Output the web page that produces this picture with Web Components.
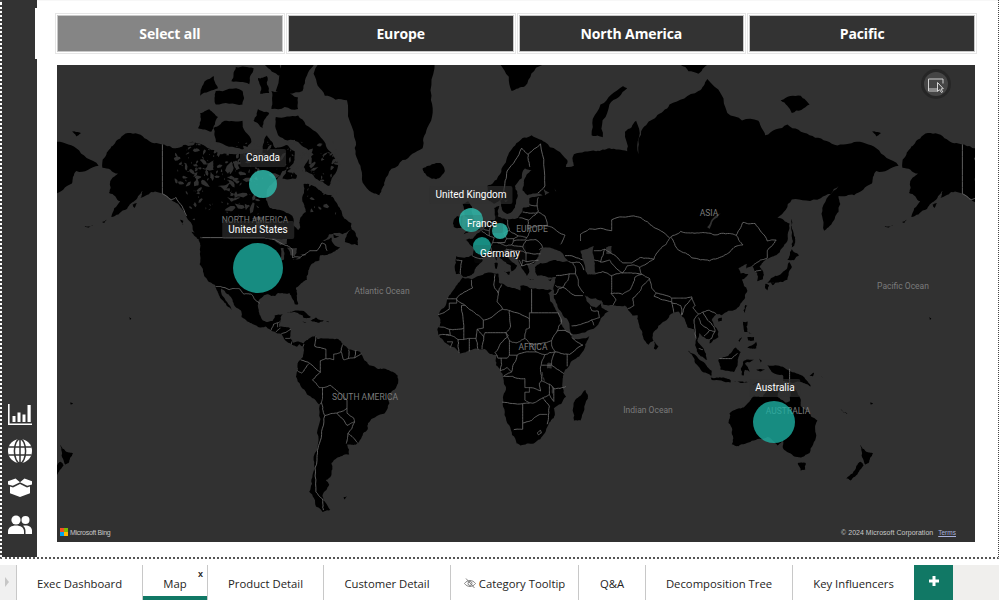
<!DOCTYPE html>
<html lang="en">
<head>
<meta charset="utf-8">
<title>Map</title>
<style>
  html, body { margin: 0; padding: 0; background: #fff; }
  body { width: 999px; height: 600px; overflow: hidden; font-family: "Open Sans", "Liberation Sans", sans-serif; }
</style>
</head>
<body>
<report-page>
  <report-sidebar slot="side"></report-sidebar>
  <slicer-bar slot="main">
    <slicer-button selected>Select all</slicer-button>
    <slicer-button>Europe</slicer-button>
    <slicer-button>North America</slicer-button>
    <slicer-button>Pacific</slicer-button>
  </slicer-bar>
  <world-map slot="main">
    <map-text x="255" y="220">NORTH AMERICA</map-text>
    <map-text x="382" y="291">Atlantic Ocean</map-text>
    <map-text x="365" y="397">SOUTH AMERICA</map-text>
    <map-text x="533" y="347">AFRICA</map-text>
    <map-text x="532" y="229">EUROPE</map-text>
    <map-text x="709" y="213">ASIA</map-text>
    <map-text x="903" y="286">Pacific Ocean</map-text>
    <map-text x="648" y="410">Indian Ocean</map-text>
    <map-text x="788" y="411">AUSTRALIA</map-text>
    <map-bubble x="263" y="184" r="14" light></map-bubble>
    <map-bubble x="258" y="268" r="25"></map-bubble>
    <map-bubble x="471" y="220" r="12" light></map-bubble>
    <map-bubble x="500" y="231" r="8" light></map-bubble>
    <map-bubble x="482" y="246" r="9"></map-bubble>
    <map-bubble x="774" y="422" r="21"></map-bubble>
    <map-label x="263" y="158">Canada</map-label>
    <map-label x="258" y="230">United States</map-label>
    <map-label x="471" y="195">United Kingdom</map-label>
    <map-label x="482" y="224" faint>France</map-label>
    <map-label x="500" y="254" faint>Germany</map-label>
    <map-label x="775" y="388">Australia</map-label>
  </world-map>
  <report-tabs slot="tabs">
    <report-tab w="126">Exec Dashboard</report-tab>
    <report-tab w="65" active>Map</report-tab>
    <report-tab w="116">Product Detail</report-tab>
    <report-tab w="127">Customer Detail</report-tab>
    <report-tab w="128" hidden-page>Category Tooltip</report-tab>
    <report-tab w="67">Q&amp;A</report-tab>
    <report-tab w="147">Decomposition Tree</report-tab>
    <report-tab w="121">Key Influencers</report-tab>
  </report-tabs>
</report-page>

<script>
// lon/lat outlines, projected to the map in WorldMap.project
const LAND = [
  // north america
  [-168,65.6,-166,68.3,-163,69.5,-156.5,71.3,-148,70.4,-141,69.6,-135,69,-128,70,-124,69.7,-115,68,-108,68,-100,68,-96,68,-94,71,-90,69,-85,69.5,-81.5,68.5,-82,66.5,-87,65,-93,62,-94.5,59,-92.5,57,-88,56.5,-82.5,55,-82,52.5,-80,51.2,-79,52,-79,54.5,-76.5,56,-78,58.5,-77.5,62.4,-73,62,-70,61,-65,60,-62,57.5,-60,55,-56,53,-56,51.5,-60,50,-66,50,-69,48,-65,49,-64.5,47.5,-61,46,-66,44,-70,43.5,-70.5,41.7,-74,40.5,-75.5,37.5,-76,35,-78,34,-81,32,-80.5,28,-80,25.5,-81.5,25.5,-82.8,28,-84,30,-89,30,-90,29,-94,29.5,-97.3,27.5,-97.7,22.5,-96,19,-94.5,18.2,-91.5,18.5,-90.5,21,-87,21.5,-88,18.5,-88.5,16,-84,15.8,-83.2,14.9,-83.7,11,-82,9,-79.5,9.5,-77.3,8.5,-77.8,7.3,-79.5,8.5,-80.5,7.3,-83,8.3,-85.7,10,-87.5,13,-91,14,-94.5,16.2,-98,16,-102,18,-105.5,20.3,-105.5,22.5,-109,26,-112.5,30,-114.7,31.7,-114.5,30,-112,26.5,-109.5,23,-112,24.8,-115,28,-116.5,31,-117.3,33,-120.5,34.5,-122.5,37.5,-124.3,40.5,-124,46,-124.7,48.4,-122.5,49,-127,50.8,-130,54.5,-134,58,-139.5,60,-146,60.7,-151,59.3,-150,61,-154,58.5,-158,56.5,-164,54.7,-160,58.6,-165,60.5,-164.5,63,-161,64.5],
  [-73,78.2,-68,76,-58,75.5,-54,70,-52,66,-48,61,-43.5,60,-41,63,-33,67,-24,69,-22,72,-20,76,-20,80,-30,83,-60,82.5,-68,80],
  [-62,66,-66,62,-72,63.5,-78,65,-73,68,-80,70,-89,71,-90,73.5,-80,73.7,-72,71.500,-67,69],
  [-117,70,-105,68.7,-101,70,-105,73,-113,73,-118,72],
  [-125,72,-119,71.5,-116,73.5,-120,74.5,-124,74],
  [-90,76.5,-78,76.5,-75,78.5,-65,81.5,-70,83,-90,82],
  [-92,74.5,-80,74.5,-80,75.8,-92,76.5],
  [-117,75,-105,75,-105,76.5,-117,76.5],
  [-124,76,-116,76.8,-118,78,-122,77.5],
  [-110,77.5,-102,77.2,-100,78.7,-108,78.8],
  [-100,73,-96,72,-93,74,-98,74.5],
  [-97,76.2,-93,76.3,-94,78,-98,77.8],
  [-95,79,-88,78,-86,81,-95,81],
  [-87,63.5,-81,63.5,-80.5,64.2,-85,65.8],
  [-59,47.7,-53,46.7,-53,48.5,-56,51.5,-58,50],
  [-128,50.7,-125,50,-123.5,48.4,-125.5,48.8],
  [-133,54,-131.7,53.8,-131.7,52.5],
  [-64,50,-61.5,49.2,-64,49],
  [-85,22,-80,23,-74.2,20.2,-77.5,19.9,-78,21,-82,22.3],
  [-74.4,18.5,-72,20,-68.4,18.7,-71,17.8],
  [-78.3,18.4,-76.3,18.1,-77,17.8],
  [-67.2,18.5,-65.7,18.4,-66.5,18],
  [-156,20.2,-155,19.7,-155.6,19],
  [-168.5,53.4,-166,54,-167,53.2],[-176,52.2,-172,52.6,-174,51.9],[-154.5,57.8,-152.5,58.2,-153.5,57],
  // south america
  [-77.5,8.5,-75,11,-72,12.2,-71.5,10.8,-68,11,-62,10.7,-60,8.5,-57,6,-52,5,-50,1,-48,-1,-44,-2.7,-40,-3,-35.3,-5.5,-35,-9,-39,-14,-39,-18,-41,-22,-45,-23.5,-48.5,-26,-48.7,-28.5,-52,-32.5,-54,-34.5,-58,-34.5,-57,-38,-62,-39,-65,-41,-65,-45,-67.5,-46.5,-66,-48,-69,-51,-68.5,-52.5,-65.5,-55,-69,-55.5,-72,-54,-75,-50,-73.5,-45,-73,-40,-71.5,-30,-70.3,-18.5,-76,-14,-81,-6,-80,-2.5,-80,0.5,-78,2.5,-77.5,5],
  [-59.5,-51.5,-58,-51.3,-59,-52.2],
  // africa
  [-6,35.8,-2,35.2,3,36.8,10,37.3,10.3,34,15,32.3,20,31,20,32.8,25,31.7,32,31.2,34.3,31.2,32.5,29.9,35.5,24,37.3,21,39,16,43,12,44,10.5,51,12,49,7,45,2,40,-3,39,-7,40.5,-15,35,-20,35,-24,32.8,-26,31,-30,26,-34,20,-34.8,18.3,-34,15,-27,12,-18,13.5,-11,12,-5,9,-1,9.7,3.5,6,4.3,4,6.3,-4,5.2,-7.5,4.4,-13,8.5,-16.8,12.5,-17.4,14.7,-16,19,-17,21,-13,27.5,-9.8,31.5],
  [49.3,-12,50.3,-15.8,47,-25,44,-25,43.5,-21,44.5,-16.5],
  // eurasia
  [-9,37,-9.5,38.8,-9,43.2,-1.5,43.5,-1,46,-4.7,48.3,-1.5,48.7,1.5,50.5,4,52,5,53.3,8.5,54,8.2,57,10.5,57.5,10,54.8,14,54,19,54.5,21,57,24,57.3,24,59.3,30,60,23,60,21,61,21.5,63,25,65.2,22,65.5,17.5,62,18.8,59.8,16.5,56.3,14,55.5,12.5,56,11,59,8,58,5,59,5,62,10,64,14,67.5,19,70,25,71,31,70,41,67,40,64.8,35,64.2,34.5,66,44,66,44,68,54,68.5,60,69,68,68.5,67,71.5,72,73,73,68,75,72,81,73.5,87,75,100,76.5,104,77.7,113,74,127,73,130,71,140,72.5,150,71,160,69.7,170,70,180,69,190,66,180,65,178,62.5,170,60,163,59.8,163,56,160,53,156.5,51,155.7,57,163,62,155,59.3,142,59,135.5,54.5,141,53,140,48,135,43.5,130.5,42.5,127.5,39.8,129.4,37,129,35.2,126.5,34.5,126.5,37.5,125,38.5,124.3,40,121.5,39,122,40.7,118,39,119,37.3,122.5,37,119.5,35,122,31,121,28,117,23.5,110.5,21,108,21.5,106,19,109,14,109,11.5,105,8.7,105,10.5,100.5,13.5,99.5,10,103.5,4,104,1.3,101,3,98.5,8,98,15,95,16,94,19,91,22.5,87,21,82,16.5,80,14,79.8,10,77.5,8,75,12,73,18,72.7,21,70.5,20.8,69,22.5,67,25,61,25.2,57,25.5,56.5,27,51,28,48,30,50,26.5,51.5,25,54,24,56.3,26,56.5,24,59.8,22.5,55,17,45,12.8,43,13,39,21,35,28,34.7,31.5,36,36,32,36,27.5,36.5,26.5,39.5,29,41,35,42,41.5,41.5,37,45,33,46,30.5,46,28,43,26,40.7,23,40.5,24,38,22.8,36.5,19.5,41,19,42,13.5,45.5,12.3,45,16,41.5,18.5,40,16,38,15.7,40,11,42.5,8.8,44.4,3.2,43,3,41.7,0,39.5,-2,36.8,-5.5,36,-7,37.2],
  [-5.5,50,1.5,51.2,1.7,52.7,0,53.5,-1.5,55,-2,57.5,-3.5,58.6,-6,58,-5,55,-3,54,-4.5,53,-5,51.7,-3,51.3],
  [-10,52,-6,52,-6,55,-8.5,55,-10,54],
  [-24,65.5,-22,64,-18,63.4,-14,65,-16,66.5,-21,66],
  [11,79,20,80.5,30,79,22,77,16,76.5],
  [52,71,57,70.7,60,75,68,76.8,66,77,56,75],
  [137,75.5,142,74,150,75,146,76],[178,71.5,182,71.3,180,70.8],[92,79,100,78.2,104,79,98,81],
  [12.5,38,15.5,38,15,36.7],[8.3,41,9.7,41,9.5,39,8.5,39],[8.7,43,9.5,43,9.3,41.5],
  [23.5,35.5,26.2,35.2,24.5,34.9],[32.5,35,34.5,35.6,33.5,34.6],
  [131,34,136,34,140,35,142,39.5,141,41.3,139.8,39,137,37,132.5,35.5],
  [130,33.5,131.8,33,131,31,130,32],[132.5,34,134.5,34,133.5,33],
  [140,42,143,42,145.3,43.5,142,45.5,141,43.3],
  [142,54.3,143.5,49,143,46.5,142,46,142,50],
  [120.3,23,121,25.2,122,25,121,22],[108.7,19.3,110.5,20,110.5,18.5,109,18.2],
  [80,9.7,82,7.5,81,6,80,6.5],
  [120,18.3,122.3,18.3,122,14,124,13,120.7,13.8],[122,7,126,9.5,126,6.5,124,6.5],
  [122,11.5,125,11.5,125,10,122.5,10],[118,10,119.5,11.5,118.5,9.5],
  [109,1.5,113,3,116.8,7,119,5,117.7,1,116,-4,110,-3],
  [95.3,5.5,98,4,103.5,-1,106,-3.5,105.8,-6,102,-4,98.5,0],
  [105.5,-6.5,111,-6.5,114.5,-7.7,114.5,-8.7,106,-7.6],
  [119.5,-5.5,120,0.5,125,1.5,121,0,123,-4,121,-3,120.5,-5.5],
  [127.5,2,128.5,1,127.8,-0.7],[126,-3,130,-3,128,-3.8],[124,-10,127,-8.5,126,-9.2],
  [116,-8.4,119,-8.3,122.8,-8.4,120,-9],
  [131,-1,138,-1.7,145,-5,147.7,-6.5,150.5,-10.5,146,-8.5,142.5,-9,138,-8,138,-5.5,133,-4],
  [150,-5.8,152,-4.2,151.5,-6],[155,-6,156,-7,155.5,-6.3],
  // oceania
  [114,-22,113.5,-26,115.7,-32,115,-34.3,118,-35,124,-33,131,-31.5,135.5,-34.8,138,-33,138,-35.7,143.5,-38.8,146.5,-39,150,-37.5,153,-31,153.5,-25,149,-21,146,-19,145.5,-15,142.7,-10.8,141.5,-13,141,-17,139,-17.5,135.5,-15,136.7,-12,131,-12,129,-15,125,-14.5,122,-18,119,-20],
  [144.7,-41,148.3,-41,148,-43.2,146,-43.5],
  [172.7,-34.5,175.5,-37,178.5,-37.7,176.5,-41,175,-41.5,174,-39.5],
  [172.8,-40.5,174.3,-41.7,171,-45,168.5,-46.6,166.5,-46,171,-42],
  [164,-20.2,167,-22.3,165,-21.5],[177.3,-17.5,178.6,-18,177.5,-18.3]
];

// seas and lakes drawn back over the land
const WATER = [
  [47,45,53,46.5,53,42,54,37,50,37,49,40],
  [58.5,46,61,46.5,61,44,58.5,44],
  [104,52,109,55.5,110,55.7,105,51.5],
  [-92,48.8,-85,48.6,-85,47,-88,46.8],[-87.8,45.8,-86.5,45.8,-86.5,42,-87.6,41.8],
  [-85,46,-80.5,45.8,-81.5,43.2,-83.5,43.5],[-83,42,-79,42.8,-79,42.4],[-79.5,43.7,-76.5,44,-76.8,43.4],
  [-99,53,-97,53.5,-96.5,50.5,-97,50.5],[-120,66.5,-118,67,-118,65.2,-122,65.3],[-116,62,-110,62.8,-113,61],
  [-112,59.5,-106,59.5,-110,58.5],[-104,58,-102,57.5,-103.5,56.5],[-74,57,-73,56,-74.5,56],
  [32,0,34,0,34,-2.5,32,-2.5],[29.5,-4,30,-4,31,-8,30.5,-8],[34,-10,35,-11,34.7,-14,34,-13],
  [12.5,58.8,14.5,59,13.5,58.4],[30.5,61.5,33,60.5,31,60],[35,61.5,36,61,36,60.8]
];

const BORDERS = [
  [-141,69.6,-141,60.3,-137,59,-135,59.5,-131,56,-130,55],
  [-123,49,-95,49,-94.5,48.7,-89.5,48,-84.5,46.5,-82.5,45.3,-82.5,42.8,-79,42.9,-76.5,44,-74.7,45,-71.5,45,-69.3,47.4,-67.8,47,-67,45],
  [-117,32.5,-114.8,32.5,-111,31.3,-108.2,31.7,-106.5,31.7,-104.5,29.6,-102.7,29.7,-101,29.5,-99.5,27.5,-97.2,25.9],
  [-92.2,14.5,-91,17.2,-89.2,17.8,-88.2,18.2],[-89.2,17.8,-89.2,15.9],[-90,13.8,-88,15.5],[-87.5,13,-85,14,-83.2,15],[-85.7,11,-83.7,11],[-83,8.3,-82.8,9.6],[-77.8,7.3,-77.3,8.5],
  [-72,12,-72.5,7.5,-67.5,6.2,-67.5,2,-70,1,-70,-4.2],[-70,-4.2,-75,0,-78.8,1.4],[-75,-0.2,-78.5,-4.5,-80.3,-3.4],
  [-67.5,2,-64,1.5,-64,4,-60.7,5,-60,8.3],[-57.2,6,-57.5,2,-54.5,2.3,-54,5.8],[-54.5,2.3,-51.7,4.2],[-60.7,5,-59.5,1.5,-57.5,2],
  [-70,-4.2,-73.5,-7.5,-70.5,-11,-69,-11,-69,-15.5,-69.5,-17.5,-70.3,-18.4],[-69,-11,-65.3,-10,-60.5,-13.8,-58,-16.5,-58,-20],
  [-69.5,-17.5,-68,-23,-70,-33,-71.5,-40,-72,-50,-69,-52,-68.6,-55],[-68,-23,-62.6,-22,-58,-20],[-62.6,-22,-58,-27,-54.6,-25.6,-55,-24,-58,-22,-58,-20],
  [-54.6,-25.6,-57.6,-30.2,-58.3,-34],[-57.6,-30.2,-53.3,-33.7],
  [-2,35,-1.5,32,-8.7,28,-8.7,27.3],[-13,27.7,-8.7,27.7,-8.7,26,-12,26,-12,23.5,-17,21.3],[-8.7,27.3,-4.8,25,-6.5,25,-5.5,15.5,-12,15,-16.5,16],
  [-4.8,25,1,21,3.3,19,4,19,12,23.5],[8.5,37,8,33,10,30,9.5,26.5,12,23.5],[10,30,11.5,33.2],[12,23.5,15,23,24,19.5,24,22,25,22,25,31.5],[25,22,37,22],
  [15,23,15.5,16,13.5,13.5,15,10,18,9,22,11,22.5,15,24,15.5,24,19.5],[3.3,19,3.3,15.5,0.5,15,3.5,11.8,4,13.5,13.5,13.5],[13.5,13.5,14.5,12,8.6,4.7],[3.5,11.8,2.7,6.3],
  [-12,15,-11.5,12.3,-8,10.5,-5.5,10.5,-3,11,0,11,0.5,15],[-5.5,15.5,-5.5,10.5],[-3,11,-3,5.2],[0,11,1,6],[-8,10.5,-7.5,4.4],[-11.5,12.3,-13.5,12.5],[-13,9.5,-10.5,9.5,-11.5,7],[-16.7,12.4,-12,12.5],
  [37,22,38.5,18,36.5,14.3,34,10,34,8,35.7,5,41,4,42,3.8,48,8,43,11.5],[22,11,24,9,27,5,31,3.7,35.7,5],[24,9,24,8.5,34,10],[36.5,14.3,40,14.5,43,12.5],
  [15,10,15,3.5,18.5,3.5,24,5,27,5],[8.6,4.7,9.8,2.2,14,2.2,15,3.5],[11.3,2.2,11,-3.5,14,-2,16,-4],[18.5,3.5,16,-4,12.3,-6],[12.3,-6,16.5,-6,22,-7,22,-11,24,-11,24,-13,22,-13,22,-16.5,24,-17.5],[11.8,-17.3,21,-18],
  [31,3.7,29.5,0,29,-3,29.5,-8,28.5,-9,29,-12.5,24,-11],[35.7,5,34,1,34,-1,39.5,-4.7],[29.5,-1,34,-1],[41,4,41,-1.5],[29.5,-8,33,-9.5,35,-11.5,40.4,-10.5],
  [33,-9.5,33,-14,30,-15.5,25.5,-17.8,21,-18],[35,-11.5,35,-17,33,-14],[30,-15.5,33,-19,32,-26.5],[21,-18,21,-28.5,17,-28.7],[21,-26,25,-25,29,-22.5,32,-22.5],[27.5,-30,29,-29,29.4,-30,28,-30.7,27.5,-30],
  [-1.7,43.4,3.1,42.4],[-8.8,42,-6.3,41.8,-7,37.2],[2.5,51,6,49.5,8.2,49,7.5,47.5,6.5,46.3,7.5,44],[7,53.3,6,51,6,49.5],[3.4,51.4,6,51],
  [14.2,54,15,51,12.5,50.3,13.8,48.7,13,47.5,9.6,47.5,7.5,47.5],[15,51,19,49.5,22.8,49,24,50.5,23.5,54,19.5,54.5],[13.8,48.7,17,48.7,19,49.5],[17,48.7,16,46.8,13.6,46.5,12,47,9.6,47.5],[17,48,22,48.3,22.8,49],
  [21,56,26.5,55.7,28,56.2,27.5,57.5,24,57.8],[24,54,28,56],[27.5,57.5,28,59.5],[23.5,52,32,52.3,34,52,40,49.7,38,47],[28,56,31,55,32,52.3],
  [22.5,48.2,27,48.4,30,46,28.5,45.3],[22.5,48.2,21,46.2,22.5,44.3,29,44],[22.5,44.3,22.5,41.4,26.3,41.7,28,42],[16,46.8,21,46.2],[13.6,45.5,19.3,45,22.5,44.3],[16,45,18.5,42.5],[19.3,42,20.5,40,21,42,22.5,41.4],[20.5,40,26.3,41.3],
  [24.2,65.8,23.5,68,20.5,69],[20.5,69,14,65,12.5,61,11.3,59],[23.5,68,29,69.7,31,62,27.8,60.5],
  [26.5,41.7,28,41.8],[36,36.5,42,37.2,44.7,37.2,44.5,39.7,43.5,41.1,41.6,41.5],[40,43.4,48,42],[43.5,41.1,46.5,41.2,48.5,38.5],
  [44.7,37.2,46,35,46,33,48.5,30],[42,37.2,41,34.5,39,32.2,36.5,32.3,35.7,33],[39,32.2,37,31.5,36,29.5,35,29.5],[39,32.2,44.5,29,48,29],
  [43,16.5,47,17,52,19,55.5,20,55,22.7,52,23,51.5,24.5],[52,19,53,16.7],
  [53.8,37.3,57,38,61,36.5,61,31.5,60.8,29.8,63,27.2,61.5,25],[60.8,29.8,66,29.5,69.5,31.5,71.5,36,74.5,37],[61,36.5,65,37.5,70,37.5,74.5,37],
  [53,42,56,41.3,58,45.5],[56,41.3,60,42,62,40,66,37.5],[66,37.5,68,40,71,40.3,73.5,39.5,74.5,37],[70,41,74,42.8,80,42.2,76,40.3,73.5,39.5],
  [47,48,47,50,51,51.5,61,51,61,54,71,55,77,53.5,83,51,87,49],[53,45,56,45,58,45.5,61,44,66,41,70,41],[80,42.2,82.5,45.3,85.5,47,87.3,49],
  [87.5,49.2,92,50.8,98,50.3,102,50.5,107,49.8,114,50.2,117,49.7,120,46.8,116,46,112,43.7,105,41.7,97,42.7,91,45.2,87.5,49.2],
  [117,49.7,120,53.3,125.5,53,131,48,135,48.3,131,45,131,42.7],[124.4,40,128,42,131,42.7],[125.5,38,128.3,38.5],
  [74.5,37,78,35.5,79,32,81,30,88,28,92,28,97,28.5,98.5,25,97.5,24,100,21.5,102,22.3,105,23,108,21.6],[68.2,23.7,71,25,70.5,28,74,31,75,33,78,35.5],
  [81,30,80,28.8,88,26.5,88,28],[88,26.5,89,22],[92,25,92.5,21],[88,26,92,25],[92.5,21,94,25,97,28],[100,21.5,98,19,98.5,15,99,11],[102,22.3,104,19,107,16,107.5,14,106,11,105,10.5],[100,20,101,17.5,105,14.5,102.5,12],[105,14.5,107.5,14],[100.2,6.5,102,6],
  [109.5,2,115,2,117.5,4.3],[141,-2.6,141,-9.2]
];

class ReportPage extends HTMLElement {
  constructor() {
    super();
    this.attachShadow({ mode: 'open' });
    this.shadowRoot.innerHTML = `
      <style>
        :host { display: flex; flex-direction: column; width: 999px; height: 600px; background: #fff; }
        .canvas {
          display: flex;
          height: 557px;
          border-left: 2px dotted #444;
          border-right: 1px dotted #444;
          border-bottom: 2px dotted #555;
        }
        .main {
          position: relative;
          flex: 1;
          padding: 13px 21px 0 18px;
          background: #fff;
          box-shadow: inset 0 1px 0 #f7f7f7;
        }
        .main::before {
          content: '';
          position: absolute;
          left: -2px;
          top: 8px;
          width: 2px;
          height: 51px;
          background: #fff;
        }
        .gap { height: 6px; }
      </style>
      <div class="canvas">
        <slot name="side"></slot>
        <div class="main"><slot name="main"></slot></div>
      </div>
      <div class="gap"></div>
      <slot name="tabs"></slot>`;
  }
}

class ReportSidebar extends HTMLElement {
  constructor() {
    super();
    this.attachShadow({ mode: 'open' });
    this.shadowRoot.innerHTML = `
      <style>
        :host { display: flex; flex-direction: column; align-items: center; justify-content: flex-end; width: 35px; background: #333; padding-bottom: 14px; box-sizing: border-box; }
        div { height: 37px; display: flex; align-items: center; }
        svg { display: block; fill: #fff; margin-left: 1px; }
      </style>
      <div><svg width="24" height="24" viewBox="0 0 24 24">
        <path d="M0 2h1.600v19.400H24V23H0z"/>
        <rect x="4.500" y="14" width="3" height="6"/><rect x="9.500" y="10.500" width="3" height="9.500"/><rect x="14.500" y="12.500" width="3" height="7.500"/><rect x="19.500" y="3" width="3.200" height="17"/>
      </svg></div>
      <div><svg width="24" height="24" viewBox="0 0 24 24">
        <circle cx="12" cy="12" r="12"/>
        <g fill="none" stroke="#333" stroke-width="1.500"><ellipse cx="12" cy="12" rx="5.600" ry="12"/><path d="M12 0v24M.5 8h23M.5 16h23"/></g>
      </svg></div>
      <div><svg width="24" height="20" viewBox="0 0 24 20">
        <path d="M0 3.200 7.500.6 12 4.200 4.800 7.800 0 6.400zM24 3.200 16.500.6 12 4.200l7.200 3.600L24 6.400z"/>
        <path d="M2 8.600l3 .9 7-3.500 7 3.500 3-.9v6.600L12 19 2 15.200z"/>
      </svg></div>
      <div><svg width="24" height="20" viewBox="0 0 24 20">
        <circle cx="8" cy="5" r="4.600"/><circle cx="17.500" cy="5" r="4"/>
        <path d="M0 19v-2.500C0 12.500 3.500 10.500 8 10.500s8 2 8 6V19z"/>
        <path d="M17.500 19v-3c0-2.200-.9-4-2.500-5.300.8-.2 1.700-.3 2.500-.3 3.600 0 6.500 1.900 6.500 5.200V19z"/>
      </svg></div>`;
  }
}

class SlicerBar extends HTMLElement {
  constructor() {
    super();
    this.attachShadow({ mode: 'open' });
    this.shadowRoot.innerHTML = `
      <style>
        :host { display: grid; grid-template-columns: repeat(4, 1fr); gap: 1px; height: 41px; margin-bottom: 11px; width: 922px; }
      </style>
      <slot></slot>`;
  }
}

class SlicerButton extends HTMLElement {
  constructor() {
    super();
    this.attachShadow({ mode: 'open' });
    this.shadowRoot.innerHTML = `
      <style>
        :host { display: block; box-sizing: border-box; border: 1px solid #e6e6e6; padding: 1px; }
        div {
          box-sizing: border-box;
          height: 100%;
          display: flex;
          align-items: center;
          justify-content: center;
          background: #333;
          border: 1px solid #c8c8c8;
          color: #fff;
          font: 700 14px "Open Sans", "Liberation Sans", sans-serif;
          letter-spacing: -.13px;
        }
        :host([selected]) div { background: #858585; }
      </style>
      <div><slot></slot></div>`;
  }
}

class WorldMap extends HTMLElement {
  static OX = 57;
  static OY = 65;
  static seed = 11;

  static rnd() {
    WorldMap.seed = (WorldMap.seed * 16807) % 2147483647;
    return WorldMap.seed / 2147483647;
  }

  static project(lon, lat) {
    const k = 2.224;
    const m = Math.log(Math.tan(Math.PI / 4 + lat * Math.PI / 360)) * 180 / Math.PI;
    return [476 + k * lon, 363 - k * m];
  }

  // midpoint displacement, so that the hand written outlines get a natural edge
  static rough(pts, close, factor) {
    let p = [];
    for (let i = 0; i < pts.length; i += 2) p.push(WorldMap.project(pts[i], pts[i + 1]));
    for (let it = 0; it < 3; it++) {
      const next = [];
      const n = close ? p.length : p.length - 1;
      for (let i = 0; i < n; i++) {
        const a = p[i], b = p[(i + 1) % p.length];
        const dx = b[0] - a[0], dy = b[1] - a[1];
        const j = (Math.abs(dx) < .01 || Math.abs(dy) < .01) && !close ? 0 : (WorldMap.rnd() - .5) * factor;
        next.push(a, [(a[0] + b[0]) / 2 - dy * j, (a[1] + b[1]) / 2 + dx * j]);
      }
      if (!close) next.push(p[p.length - 1]);
      p = next;
    }
    return 'M' + p.map(q => q[0].toFixed(1) + ' ' + q[1].toFixed(1)).join('L') + (close ? 'Z' : '');
  }

  // little channels and lakes that break up the Canadian arctic
  static specks() {
    let d = '';
    for (let i = 0; i < 300; i++) {
      const lon = -135 + WorldMap.rnd() * 73;
      const lat = 53 + Math.sqrt(WorldMap.rnd()) * 17;
      if (lon > -96 && lon < -76 && lat < 64) continue;
      const [x, y] = WorldMap.project(lon, lat);
      const r = .5 + WorldMap.rnd() * WorldMap.rnd() * 5;
      const a = WorldMap.rnd() * 3.14;
      const pts = [];
      for (let s = 0; s < 7; s++) {
        const t = s / 7 * 6.283;
        const u = Math.cos(t) * r * (.6 + WorldMap.rnd()), v = Math.sin(t) * r * .45 * (.6 + WorldMap.rnd());
        pts.push((x + u * Math.cos(a) - v * Math.sin(a)).toFixed(1) + ' ' + (y + u * Math.sin(a) + v * Math.cos(a)).toFixed(1));
      }
      d += 'M' + pts.join('L') + 'Z';
    }
    return d;
  }

  constructor() {
    super();
    this.attachShadow({ mode: 'open' });
    const land = LAND.map(p => WorldMap.rough(p, true, .24)).join('');
    const water = WATER.map(p => WorldMap.rough(p, true, .2)).join('');
    const borders = BORDERS.map(p => WorldMap.rough(p, false, .16)).join('');
    const world = `
      <path d="${land}" fill="#000"/>
      <path d="${water}${WorldMap.specks()}" fill="#313131"/>
      <path d="${borders}" fill="none" stroke="#686868" stroke-width=".9" stroke-linejoin="round"/>`;
    this.shadowRoot.innerHTML = `
      <style>
        :host { display: block; position: relative; width: 918px; height: 477px; margin-left: 2px; background: #313131; overflow: hidden; }
        svg.map { display: block; position: absolute; inset: 0; }
        .focus { position: absolute; right: 23px; top: 4px; }
        .attr { position: absolute; bottom: 6px; font: 7px "Liberation Sans", sans-serif; color: #c8c8c8; display: flex; align-items: center; }
        .bing { left: 3px; gap: 2px; letter-spacing: -.28px; }
        .copy { right: 19px; gap: 5px; letter-spacing: .02px; }
        .terms { color: #a9b1dc; text-decoration: underline; font-size: 6.500px; }
        .tile { display: grid; grid-template-columns: 4px 4px; gap: 0; }
        .tile i { display: block; width: 4px; height: 4px; }
      </style>
      <svg class="map" width="918" height="477" viewBox="57 65 918 477">
        <g transform="translate(-800 0)">${world}</g>
        <g>${world}</g>
        <g transform="translate(800 0)">${world}</g>
      </svg>
      <slot></slot>
      <svg class="focus" width="32" height="32" viewBox="0 0 32 32">
        <circle cx="16" cy="15" r="15" fill="#262626"/>
        <circle cx="16" cy="15" r="12" fill="#454545"/>
        <path d="M23 14.500V10H8.500v12H17" fill="none" stroke="#d0d0d0" stroke-width="1"/>
        <path d="M8.500 20H17" stroke="#d0d0d0" stroke-width="1"/>
        <path d="M17.500 13.500v9l2-1.800 2 2.800 1.200-.8-1.800-2.700 2.400-.3z" fill="#454545" stroke="#d8d8d8" stroke-width="1"/>
      </svg>
      <div class="attr bing">
        <span class="tile"><i style="background:#f25022"></i><i style="background:#7fba00"></i><i style="background:#00a4ef"></i><i style="background:#ffb900"></i></span>
        <span>Microsoft Bing</span>
      </div>
      <div class="attr copy"><span>© 2024 Microsoft Corporation</span><span class="terms">Terms</span></div>`;
  }
}

class MapPinBase extends HTMLElement {
  place() {
    this.style.left = (this.getAttribute('x') - WorldMap.OX) + 'px';
    this.style.top = (this.getAttribute('y') - WorldMap.OY) + 'px';
  }
}

class MapBubble extends MapPinBase {
  constructor() {
    super();
    this.attachShadow({ mode: 'open' });
    this.shadowRoot.innerHTML = `
      <style>
        :host { position: absolute; display: block; border-radius: 50%; background: rgba(30, 180, 165, .78); transform: translate(-50%, -50%); }
        :host([light]) { background: rgba(48, 185, 170, .85); }
      </style>`;
  }
  connectedCallback() {
    this.place();
    const d = this.getAttribute('r') * 2 + 'px';
    this.style.width = d;
    this.style.height = d;
  }
}

class MapLabel extends MapPinBase {
  constructor() {
    super();
    this.attachShadow({ mode: 'open' });
    this.shadowRoot.innerHTML = `
      <style>
        :host {
          position: absolute;
          display: block;
          transform: translate(-50%, -50%);
          padding: 3px 6px;
          border-radius: 2px;
          background: rgba(48, 48, 48, .65);
          color: #fff;
          font: 400 10px Roboto, "Liberation Sans", sans-serif;
          white-space: nowrap;
          line-height: 12px;
        }
        :host([faint]) { background: rgba(48, 48, 48, .12); }
      </style>
      <slot></slot>`;
  }
  connectedCallback() { this.place(); }
}

class MapText extends MapPinBase {
  constructor() {
    super();
    this.attachShadow({ mode: 'open' });
    this.shadowRoot.innerHTML = `
      <style>
        :host { position: absolute; display: block; transform: translate(-50%, -50%); color: #7b7b7b; font: 8.500px Roboto, "Liberation Sans", sans-serif; white-space: nowrap; }
      </style>
      <slot></slot>`;
  }
  connectedCallback() { this.place(); }
}

class ReportTabs extends HTMLElement {
  constructor() {
    super();
    this.attachShadow({ mode: 'open' });
    this.shadowRoot.innerHTML = `
      <style>
        :host { display: flex; height: 35px; background: #f0efed; }
        .back { width: 16px; box-sizing: content-box; background: #f0f0f0; border-right: 1px solid #c8c8c8; display: flex; align-items: center; justify-content: center; }
        .back i { display: block; border-left: 4px solid #c6c6c6; border-top: 5px solid transparent; border-bottom: 5px solid transparent; margin-left: -2px; margin-top: -1px; }
        .tabs { display: flex; background: #fff; }
        .add { width: 39px; background: #117865; display: flex; justify-content: center; padding-top: 10px; box-sizing: border-box; }
        .add svg { display: block; }
      </style>
      <div class="back"><i></i></div>
      <div class="tabs"><slot></slot></div>
      <div class="add"><svg width="12" height="12" viewBox="0 0 12 12"><path d="M4.500 1h3v3.500H11v3H7.500V11h-3V7.500H1v-3h3.500z" fill="#fff"/></svg></div>`;
  }
}

class ReportTab extends HTMLElement {
  constructor() {
    super();
    this.attachShadow({ mode: 'open' });
    this.shadowRoot.innerHTML = `
      <style>
        :host {
          display: flex;
          position: relative;
          align-items: center;
          justify-content: center;
          box-sizing: border-box;
          height: 35px;
          padding-top: 1px;
          border-right: 1px solid #c8c8c8;
          color: #252423;
          font: 11.300px "Open Sans", "Liberation Sans", sans-serif;
          white-space: nowrap;
        }
        :host(:last-child) { border-right: 0; }
        :host([active]) { box-shadow: inset 0 -4px 0 #117865; }
        .close { display: none; position: absolute; right: 4px; top: 4px; font: 700 9px "Liberation Sans", sans-serif; }
        :host([active]) .close { display: block; }
        svg { display: none; margin-right: 3px; }
        :host([hidden-page]) svg { display: block; }
      </style>
      <svg width="12" height="12" viewBox="0 0 12 12" fill="none" stroke="#777" stroke-width=".9">
        <path d="M.5 6.500C2 4.500 4 3.500 6 3.500s4 1 5.500 3C10 8.500 8 9.500 6 9.500s-4-1-5.500-3z"/><circle cx="6" cy="6.500" r="2"/><path d="M2 1.500l8.500 9.500"/>
      </svg>
      <slot></slot>
      <span class="close">x</span>`;
  }
  connectedCallback() {
    this.style.width = this.getAttribute('w') + 'px';
  }
}

customElements.define('report-page', ReportPage);
customElements.define('report-sidebar', ReportSidebar);
customElements.define('slicer-bar', SlicerBar);
customElements.define('slicer-button', SlicerButton);
customElements.define('world-map', WorldMap);
customElements.define('map-bubble', MapBubble);
customElements.define('map-label', MapLabel);
customElements.define('map-text', MapText);
customElements.define('report-tabs', ReportTabs);
customElements.define('report-tab', ReportTab);
</script>
</body>
</html>
